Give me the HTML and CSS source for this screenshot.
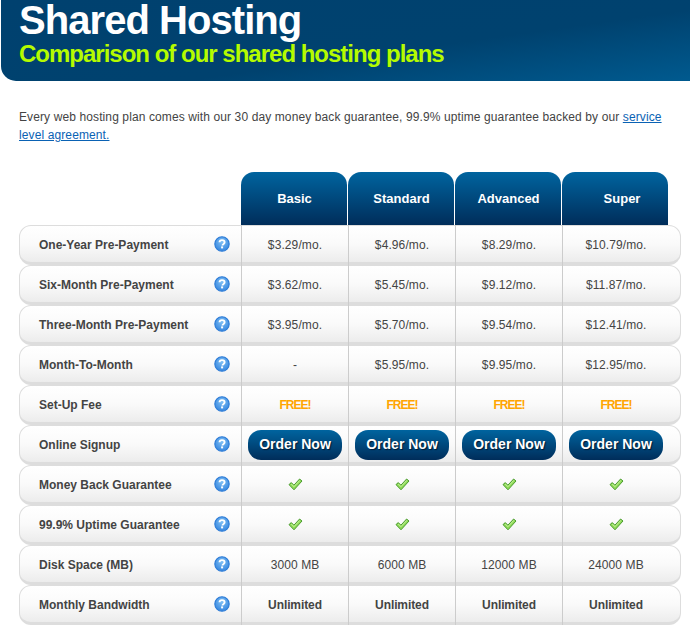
FILE: index.html
```html
<!DOCTYPE html>
<html lang="en">
<head>
<meta charset="utf-8">
<title>Shared Hosting</title>
<link rel="stylesheet" href="styles.css">
</head>
<body>
<svg class="defs" width="0" height="0" aria-hidden="true">
  <defs>
    <radialGradient id="qfill" cx="50%" cy="35%" r="70%">
      <stop offset="0" stop-color="#7fc0f5"/>
      <stop offset="1" stop-color="#2f80dc"/>
    </radialGradient>
    <symbol id="help" viewBox="0 0 16 16">
      <circle cx="8" cy="8" r="7.2" fill="url(#qfill)" stroke="#2a7ad6" stroke-width="1.1"/>
      <path d="M5.5 6.3C5.6 4.8 6.7 4.1 8 4.1c1.5 0 2.6.8 2.6 2.1 0 1-.6 1.5-1.3 2-.6.4-.8.7-.8 1.3" fill="none" stroke="#fff" stroke-width="1.9"/>
      <rect x="7.1" y="10.4" width="2" height="2" fill="#fff"/>
    </symbol>
    <symbol id="check" viewBox="0 0 15 13">
      <path d="M1 6.6 3.3 4.6 5.9 7.2 11.6 1 14 3 6 11.8Z" fill="#8fdc55" stroke="#4a9a30" stroke-width="1" stroke-linejoin="round"/>
      <path d="M3.3 6 5.9 8.7 11.8 2.4" fill="none" stroke="#c6f0a0" stroke-width="1"/>
    </symbol>
  </defs>
</svg>
<header class="banner">
  <h1 class="title">Shared Hosting</h1>
  <h2 class="subtitle">Comparison of our shared hosting plans</h2>
</header>
<p class="intro">Every web hosting plan comes with our 30 day money back guarantee, 99.9% uptime guarantee backed by our <a href="#">service</a><br><a href="#">level agreement.</a></p>
<section class="plans">
  <div class="plan-heads">
    <div class="plan-head">Basic</div>
    <div class="plan-head">Standard</div>
    <div class="plan-head">Advanced</div>
    <div class="plan-head plan-head-last">Super</div>
  </div>
  <div class="row">
    <div class="label">One-Year Pre-Payment<svg class="help"><use href="#help"/></svg></div>
    <div class="cell">$3.29/mo.</div><div class="cell">$4.96/mo.</div><div class="cell">$8.29/mo.</div><div class="cell">$10.79/mo.</div>
  </div>
  <div class="row">
    <div class="label">Six-Month Pre-Payment<svg class="help"><use href="#help"/></svg></div>
    <div class="cell">$3.62/mo.</div><div class="cell">$5.45/mo.</div><div class="cell">$9.12/mo.</div><div class="cell">$11.87/mo.</div>
  </div>
  <div class="row">
    <div class="label">Three-Month Pre-Payment<svg class="help"><use href="#help"/></svg></div>
    <div class="cell">$3.95/mo.</div><div class="cell">$5.70/mo.</div><div class="cell">$9.54/mo.</div><div class="cell">$12.41/mo.</div>
  </div>
  <div class="row">
    <div class="label">Month-To-Month<svg class="help"><use href="#help"/></svg></div>
    <div class="cell">-</div><div class="cell">$5.95/mo.</div><div class="cell">$9.95/mo.</div><div class="cell">$12.95/mo.</div>
  </div>
  <div class="row">
    <div class="label">Set-Up Fee<svg class="help"><use href="#help"/></svg></div>
    <div class="cell free">FREE!</div><div class="cell free">FREE!</div><div class="cell free">FREE!</div><div class="cell free">FREE!</div>
  </div>
  <div class="row">
    <div class="label">Online Signup<svg class="help"><use href="#help"/></svg></div>
    <div class="cell"><a class="order" href="#">Order Now</a></div><div class="cell"><a class="order" href="#">Order Now</a></div><div class="cell"><a class="order" href="#">Order Now</a></div><div class="cell"><a class="order" href="#">Order Now</a></div>
  </div>
  <div class="row">
    <div class="label">Money Back Guarantee<svg class="help"><use href="#help"/></svg></div>
    <div class="cell"><svg class="check"><use href="#check"/></svg></div><div class="cell"><svg class="check"><use href="#check"/></svg></div><div class="cell"><svg class="check"><use href="#check"/></svg></div><div class="cell"><svg class="check"><use href="#check"/></svg></div>
  </div>
  <div class="row">
    <div class="label">99.9% Uptime Guarantee<svg class="help"><use href="#help"/></svg></div>
    <div class="cell"><svg class="check"><use href="#check"/></svg></div><div class="cell"><svg class="check"><use href="#check"/></svg></div><div class="cell"><svg class="check"><use href="#check"/></svg></div><div class="cell"><svg class="check"><use href="#check"/></svg></div>
  </div>
  <div class="row">
    <div class="label">Disk Space (MB)<svg class="help"><use href="#help"/></svg></div>
    <div class="cell">3000 MB</div><div class="cell">6000 MB</div><div class="cell">12000 MB</div><div class="cell">24000 MB</div>
  </div>
  <div class="row">
    <div class="label">Monthly Bandwidth<svg class="help"><use href="#help"/></svg></div>
    <div class="cell strong">Unlimited</div><div class="cell strong">Unlimited</div><div class="cell strong">Unlimited</div><div class="cell strong">Unlimited</div>
  </div>
</section>
</body>
</html>
```
FILE: styles.css
```css
* { box-sizing: border-box; }
html, body { margin: 0; padding: 0; }
body {
  width: 690px;
  height: 629px;
  overflow: hidden;
  background: #fff;
  font-family: "Liberation Sans", Arial, sans-serif;
  font-size: 12px;
  color: #444;
}
.defs { position: absolute; }
.banner {
  height: 81px;
  margin-left: 1px;
  padding: 0 0 0 18px;
  border-bottom-left-radius: 15px;
  background: linear-gradient(172deg, #00416f 0%, #00426f 60%, #005a8f 100%);
}
.title {
  margin: 0;
  font-size: 40px;
  line-height: 40px;
  letter-spacing: -0.95px;
  font-weight: 700;
  color: #fff;
}
.subtitle {
  margin: 2px 0 0;
  font-size: 24px;
  line-height: 24px;
  letter-spacing: -1px;
  font-weight: 700;
  color: #b5fb00;
}
.intro {
  margin: 27px 0 0 19px;
  width: 650px;
  font-size: 12px;
  line-height: 18px;
  letter-spacing: 0.11px;
  color: #444;
}
.intro a { color: #0a62b4; text-decoration: underline; }
.plans { margin: 28px 0 0 19px; width: 662px; }
.plan-heads { display: flex; padding-left: 222px; gap: 1px; }
.plan-head {
  width: 106px;
  height: 53px;
  padding: 19px 0 0 1px;
  border-radius: 13px 13px 0 0;
  background: linear-gradient(#00649f, #002d5a);
  color: #fff;
  font-size: 13px;
  font-weight: 700;
  line-height: 16px;
  text-align: center;
}
.plan-head-last { padding-left: 14px; }
.row {
  display: grid;
  grid-template-columns: 222px 107px 107px 107px 119px;
  height: 40px;
  border: 1px solid #ddd;
  border-bottom: 3px solid #ddd;
  border-radius: 12px;
  background: linear-gradient(#fff 0%, #fafafa 50%, #ececec 100%);
}
.label {
  display: flex;
  align-items: center;
  justify-content: space-between;
  padding: 0 11px 0 19px;
  border-right: 1px solid #ccc;
  margin-top: -1px;
  margin-bottom: -3px;
  font-weight: 700;
  color: #444;
}
.cell {
  display: flex;
  align-items: center;
  justify-content: center;
  border-right: 1px solid #ccc;
  margin-top: -1px;
  margin-bottom: -3px;
  letter-spacing: 0.1px;
}
.cell:last-child { border-right: 0; padding-right: 13px; }
.free { color: #ffa500; font-weight: 700; font-size: 12px; letter-spacing: -1px; }
.strong { font-weight: 700; letter-spacing: -0.1px; }
.help { width: 16px; height: 16px; flex: none; margin-top: -2px; }
.check { width: 15px; height: 13px; margin-top: -1px; }
.order {
  display: block;
  width: 94px;
  height: 30px;
  border-radius: 13px;
  background: linear-gradient(#00649f, #002d5a);
  color: #fff;
  font-size: 14px;
  font-weight: 700;
  line-height: 28px;
  letter-spacing: 0;
  text-align: center;
  text-decoration: none;
  text-shadow: 1px 1px 1px #001a33;
}
```
